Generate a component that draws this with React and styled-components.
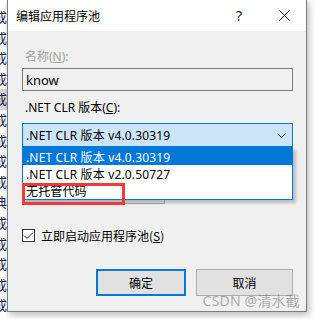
import React from "react";
import styled, { createGlobalStyle } from "styled-components";

const GlobalStyle = createGlobalStyle`
  html, body {
    margin: 0;
    padding: 0;
    background: #ffffff;
    overflow: hidden;
  }
  body {
    font-family: "Noto Sans", "Noto Sans CJK SC", sans-serif;
    font-size: 12px;
    color: #000;
  }
`;

const Page = styled.div`
  display: flex;
  width: 316px;
  height: 319px;
  overflow: hidden;
`;

const BackStrip = styled.div`
  width: 7px;
  flex-shrink: 0;
  padding-top: 7px;
  overflow: hidden;
`;

const BackRow = styled.div`
  height: 20.6px;
  line-height: 20.6px;
  white-space: nowrap;
  text-indent: -6px;
  font-size: 13px;
  color: #1c2440;
  background: ${(p) => (p.$selected ? "#d9d9d9" : "transparent")};
  font-family: "Noto Sans CJK SC", sans-serif;
`;

const Dialog = styled.div`
  position: relative;
  width: 300px;
  height: 313px;
  margin-top: -1px;
  box-sizing: border-box;
  border: 1px solid #7d7d7d;
  background: #f0f0f0;
  box-shadow: 2px 3px 7px rgba(0, 0, 0, 0.28);
  display: flex;
  flex-direction: column;
`;

const TitleBar = styled.div`
  height: 31px;
  background: #fff;
  display: flex;
  align-items: center;
  padding-left: 8px;
  flex-shrink: 0;
`;

const Title = styled.div`
  flex: 1;
  font-family: "Noto Sans CJK SC", sans-serif;
  font-size: 12px;
`;

const TitleButton = styled.div`
  width: ${(p) => p.$w}px;
  display: flex;
  justify-content: center;
  align-items: center;
  font-size: 14px;
  color: #111;
`;

const Body = styled.div`
  position: relative;
  padding: 18px 13px 0 14px;
  display: flex;
  flex-direction: column;
`;

const Label = styled.div`
  height: 16px;
  line-height: 16px;
  padding-left: 3px;
  margin-top: ${(p) => p.$mt || 0}px;
  color: ${(p) => (p.$disabled ? "#a2a2a2" : "#000")};
  font-family: "Noto Sans", "Noto Sans CJK SC", sans-serif;
  u { text-decoration: underline; }
`;

const TextBox = styled.div`
  margin-top: 3px;
  height: 23px;
  box-sizing: border-box;
  border: 1px solid #7a7a7a;
  display: flex;
  align-items: center;
  padding-left: 3px;
  font-size: 13px;
`;

const ComboWrap = styled.div`
  position: relative;
  margin-top: ${(p) => p.$mt}px;
  width: ${(p) => p.$w}px;
`;

const Combo = styled.div`
  height: 24px;
  box-sizing: border-box;
  border: 1px solid ${(p) => (p.$active ? "#0078d7" : "#adadad")};
  background: ${(p) => (p.$active ? "#cce4f7" : "#e5e5e5")};
  display: flex;
  align-items: center;
  padding-left: 3px;
`;

const ComboText = styled.div`
  flex: 1;
  white-space: nowrap;
  letter-spacing: 0.15px;
`;

const Chevron = styled.svg`
  margin-right: 6px;
`;

const DropList = styled.div`
  position: absolute;
  top: 100%;
  left: 0;
  right: 0;
  z-index: 2;
  border: 1px solid #0078d7;
  background: #fff;
  box-shadow: 3px 3px 3px rgba(0, 0, 0, 0.22);
`;

const Option = styled.div`
  height: 17px;
  line-height: 19px;
  padding-left: 3px;
  white-space: nowrap;
  letter-spacing: 0.15px;
  background: ${(p) => (p.$selected ? "#0078d7" : "#fff")};
  color: ${(p) => (p.$selected ? "#fff" : "#000")};
`;

const Mark = styled.div`
  position: absolute;
  left: -1px;
  top: 35px;
  width: 103px;
  height: 22px;
  box-sizing: border-box;
  border: 3px solid #f03a3a;
  pointer-events: none;
`;

const CheckRow = styled.div`
  margin-top: 23px;
  display: flex;
  align-items: center;
  gap: 6px;
  font-family: "Noto Sans CJK SC", sans-serif;
`;

const CheckBox = styled.div`
  width: 13px;
  height: 13px;
  box-sizing: border-box;
  border: 1px solid #333;
  background: #fff;
  display: flex;
  align-items: center;
  justify-content: center;
`;

const ButtonRow = styled.div`
  margin-top: 25px;
  display: flex;
  justify-content: flex-end;
  gap: 10px;
`;

const Button = styled.div`
  width: ${(p) => p.$w}px;
  height: 27px;
  box-sizing: border-box;
  border: ${(p) => (p.$default ? "2px solid #0078d7" : "1px solid #adadad")};
  background: #e1e1e1;
  display: flex;
  align-items: center;
  justify-content: center;
  font-family: "Noto Sans CJK SC", sans-serif;
`;

const Watermark = styled.div`
  position: absolute;
  right: 6px;
  bottom: 1px;
  font-size: 14px;
  color: rgba(120, 120, 120, 0.6);
  font-family: "Noto Sans", "Noto Sans CJK SC", sans-serif;
  letter-spacing: 0.2px;
`;

const backChars = ["成", "成", "成", "成", "成", "成", "成", "成", "成", "典", "成", "成", "成", "成", "成"];

export default function App() {
  return (
    <>
      <GlobalStyle />
      <Page>
        <BackStrip>
          {backChars.map((c, i) => (
            <BackRow key={i} $selected={i === 4}>{c}</BackRow>
          ))}
        </BackStrip>
        <Dialog>
          <TitleBar>
            <Title>编辑应用程序池</Title>
            <TitleButton $w={46}>?</TitleButton>
            <TitleButton $w={44}>
              <svg width="11" height="11" viewBox="0 0 11 11">
                <path d="M0.5 0.5L10.5 10.5M10.5 0.5L0.5 10.5" stroke="#111" strokeWidth="1" />
              </svg>
            </TitleButton>
          </TitleBar>
          <Body>
            <Label $disabled>名称(<u>N</u>):</Label>
            <TextBox>know</TextBox>
            <Label $mt={9}>.NET CLR 版本(<u>C</u>):</Label>
            <ComboWrap $mt={7} $w={271}>
              <Combo $active>
                <ComboText>.NET CLR 版本 v4.0.30319</ComboText>
                <Chevron width="9" height="5" viewBox="0 0 9 5">
                  <path d="M0.5 0.5L4.5 4.5L8.5 0.5" fill="none" stroke="#555" strokeWidth="1" />
                </Chevron>
              </Combo>
              <DropList>
                <Option $selected>.NET CLR 版本 v4.0.30319</Option>
                <Option>.NET CLR 版本 v2.0.50727</Option>
                <Option>无托管代码</Option>
                <Mark />
              </DropList>
            </ComboWrap>
            {/* pipeline-mode label and combo sit under the open list */}
            <Label $mt={9} />
            <ComboWrap $mt={8} $w={143}>
              <Combo />
            </ComboWrap>
            <CheckRow>
              <CheckBox>
                <svg width="11" height="9" viewBox="0 0 11 9">
                  <path d="M1 4.5L4 7.5L10 1.5" fill="none" stroke="#222" strokeWidth="1" />
                </svg>
              </CheckBox>
              <span>立即启动应用程序池(<u>S</u>)</span>
            </CheckRow>
            <ButtonRow>
              <Button $w={90} $default>确定</Button>
              <Button $w={97}>取消</Button>
            </ButtonRow>
          </Body>
          <Watermark>CSDN @清水截</Watermark>
        </Dialog>
      </Page>
    </>
  );
}
